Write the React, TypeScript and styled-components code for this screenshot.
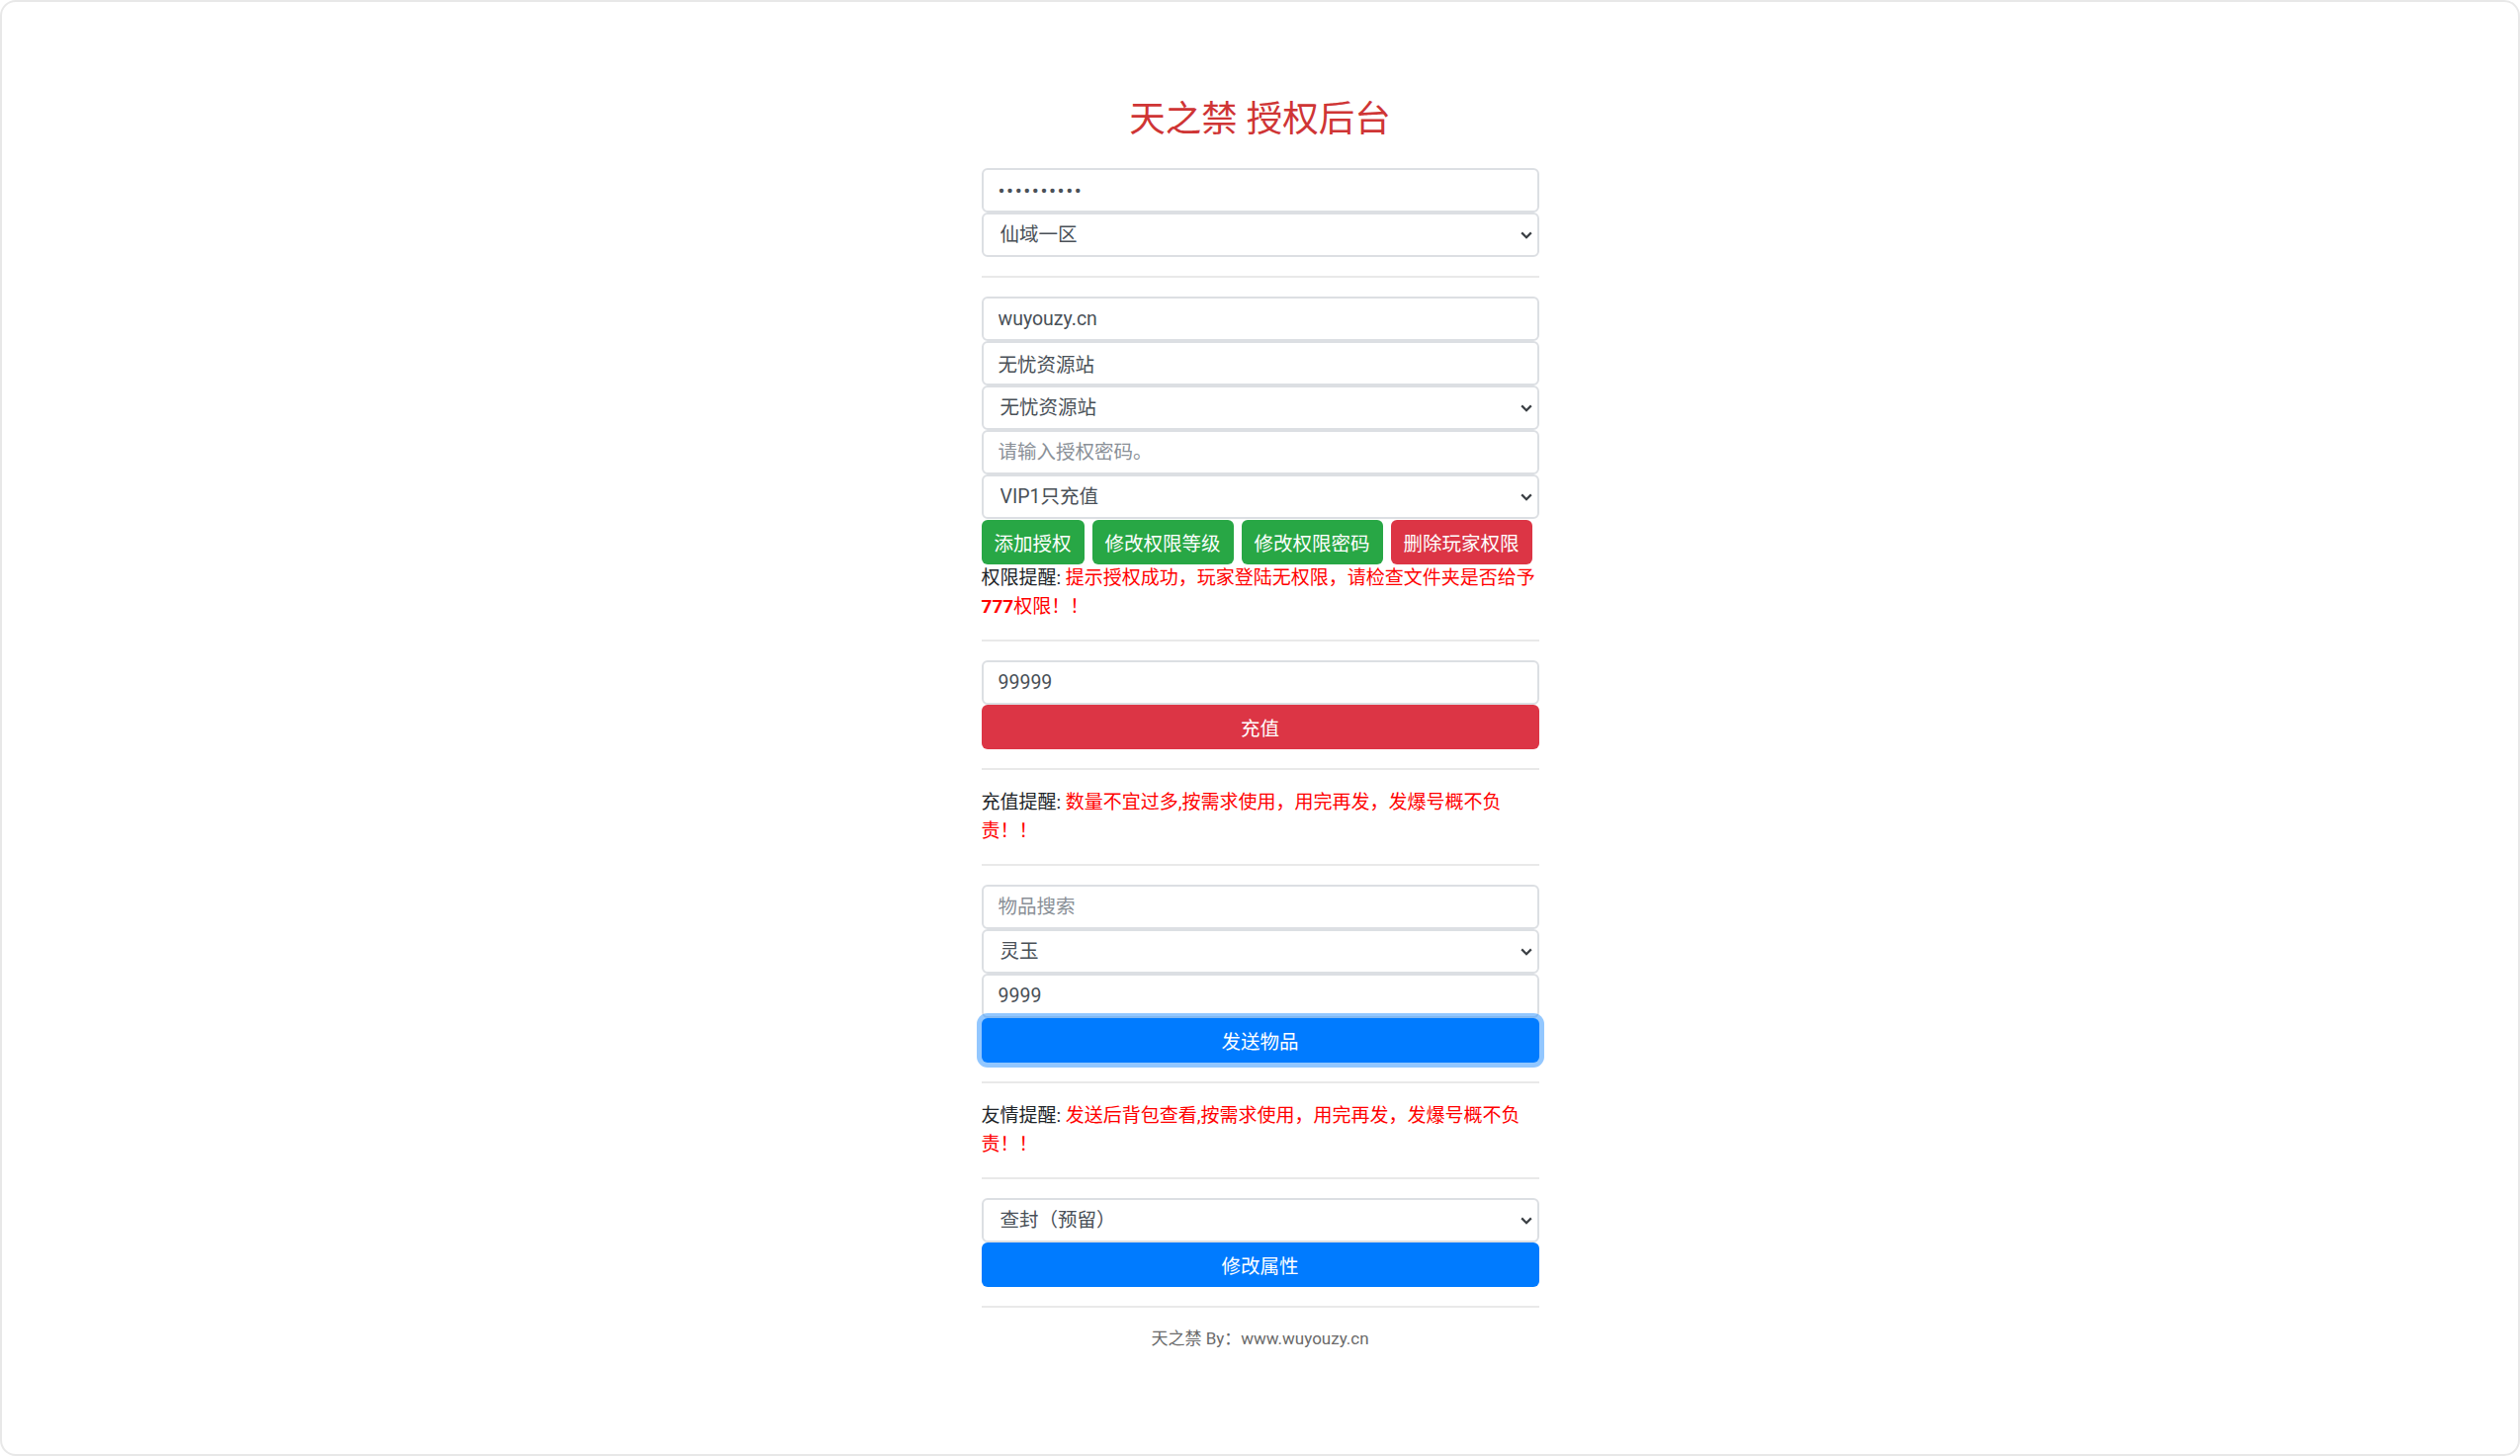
import styled, { createGlobalStyle } from "styled-components";

const GlobalStyle = createGlobalStyle`
  html, body {
    margin: 0;
    padding: 0;
    background: #ffffff;
  }
  body {
    font-family: Roboto, "Noto Sans CJK SC", sans-serif;
    color: #212529;
  }
  * {
    box-sizing: border-box;
  }
`;

const Frame = styled.div`
  height: 100vh;
  border: 2px solid #e8e8e8;
  border-radius: 16px;
  overflow: hidden;
`;

const Container = styled.div`
  width: 564px;
  margin: 0 auto;
  padding-top: 97px;
`;

const Title = styled.h3`
  margin: 0 0 27px;
  text-align: center;
  font-size: 36.5px;
  font-weight: 400;
  line-height: 44px;
  color: #cf3535;
`;

const Stack = styled.div`
  display: flex;
  flex-direction: column;
`;

const Field = styled.input<{ $secret?: boolean }>`
  display: block;
  width: 100%;
  height: 45px;
  padding: 0 15px;
  font-family: inherit;
  font-size: ${(p) => (p.$secret ? "21px" : "19.5px")};
  letter-spacing: ${(p) => (p.$secret ? "1.5px" : "normal")};
  color: #495057;
  background: #fff;
  border: 2px solid #dcdfe3;
  border-radius: 6px;
  outline: none;

  &::placeholder {
    color: #8a9097;
  }
`;

const SelectWrap = styled.div`
  position: relative;
`;

const Select = styled.select`
  display: block;
  width: 100%;
  height: 45px;
  padding: 0 30px 0 17px;
  font-family: inherit;
  font-size: 19.5px;
  color: #495057;
  background: #fff;
  border: 2px solid #dcdfe3;
  border-radius: 6px;
  appearance: none;
  outline: none;
`;

const Chevron = styled.svg`
  position: absolute;
  right: 7px;
  top: 50%;
  width: 12px;
  height: 8px;
  margin-top: -4px;
  pointer-events: none;
`;

const colors = {
  success: "#28a745",
  danger: "#dc3545",
  primary: "#007bff",
};

const Button = styled.button<{ $variant: keyof typeof colors; $block?: boolean; $focus?: boolean }>`
  position: relative;
  display: ${(p) => (p.$block ? "block" : "inline-block")};
  width: ${(p) => (p.$block ? "100%" : "auto")};
  height: 45px;
  padding: 0 13px;
  font-family: inherit;
  font-size: 19.5px;
  color: #fff;
  background: ${(p) => colors[p.$variant]};
  border: none;
  border-radius: 6px;
  box-shadow: ${(p) => (p.$focus ? "0 0 0 5px rgba(38, 143, 255, 0.5)" : "none")};
  cursor: pointer;
`;

const ButtonRow = styled.div`
  display: flex;
  gap: 8px;
  margin-top: 1px;
`;

const Divider = styled.hr`
  margin: 19px 0;
  border: 0;
  border-top: 2px solid #e9e9e9;
`;

const Note = styled.p`
  margin: 0;
  font-size: 19px;
  line-height: 28.5px;
  color: #212529;
`;

const Warn = styled.span`
  color: #ff0000;
`;

const Strong = styled.b`
  font-weight: 700;
`;

const Footer = styled.div`
  margin-top: -1px;
  text-align: center;
  font-size: 17px;
  line-height: 27px;
  color: #6a6a6a;
`;

const Dropdown = ({ value }: { value: string }) => (
  <SelectWrap>
    <Select defaultValue={value}>
      <option value={value}>{value}</option>
    </Select>
    <Chevron viewBox="0 0 12 8">
      <path d="M1.2 1.4 L6 6.2 L10.8 1.4" fill="none" stroke="#3a3f44" strokeWidth="2.2" />
    </Chevron>
  </SelectWrap>
);

export default function App() {
  return (
    <>
      <GlobalStyle />
      <Frame>
        <Container>
          <Title>天之禁 授权后台</Title>

          <Stack>
            <Field type="password" $secret defaultValue="1234567890" />
            <Dropdown value="仙域一区" />
          </Stack>

          <Divider />

          <Stack>
            <Field defaultValue="wuyouzy.cn" />
            <Field defaultValue="无忧资源站" />
            <Dropdown value="无忧资源站" />
            <Field placeholder="请输入授权密码。" />
            <Dropdown value="VIP1只充值" />
          </Stack>
          <ButtonRow>
            <Button $variant="success">添加授权</Button>
            <Button $variant="success">修改权限等级</Button>
            <Button $variant="success">修改权限密码</Button>
            <Button $variant="danger">删除玩家权限</Button>
          </ButtonRow>
          <Note>
            权限提醒: <Warn>提示授权成功，玩家登陆无权限，请检查文件夹是否给予<Strong>777</Strong>权限！！</Warn>
          </Note>

          <Divider />

          <Stack>
            <Field defaultValue="99999" />
            <Button $variant="danger" $block>
              充值
            </Button>
          </Stack>

          <Divider />

          <Note>
            充值提醒: <Warn>数量不宜过多,按需求使用，用完再发，发爆号概不负责！！</Warn>
          </Note>

          <Divider />

          <Stack>
            <Field placeholder="物品搜索" />
            <Dropdown value="灵玉" />
            <Field defaultValue="9999" />
            <Button $variant="primary" $block $focus>
              发送物品
            </Button>
          </Stack>

          <Divider />

          <Note>
            友情提醒: <Warn>发送后背包查看,按需求使用，用完再发，发爆号概不负责！！</Warn>
          </Note>

          <Divider />

          <Stack>
            <Dropdown value="查封（预留）" />
            <Button $variant="primary" $block>
              修改属性
            </Button>
          </Stack>

          <Divider />

          <Footer>天之禁 By：www.wuyouzy.cn</Footer>
        </Container>
      </Frame>
    </>
  );
}
